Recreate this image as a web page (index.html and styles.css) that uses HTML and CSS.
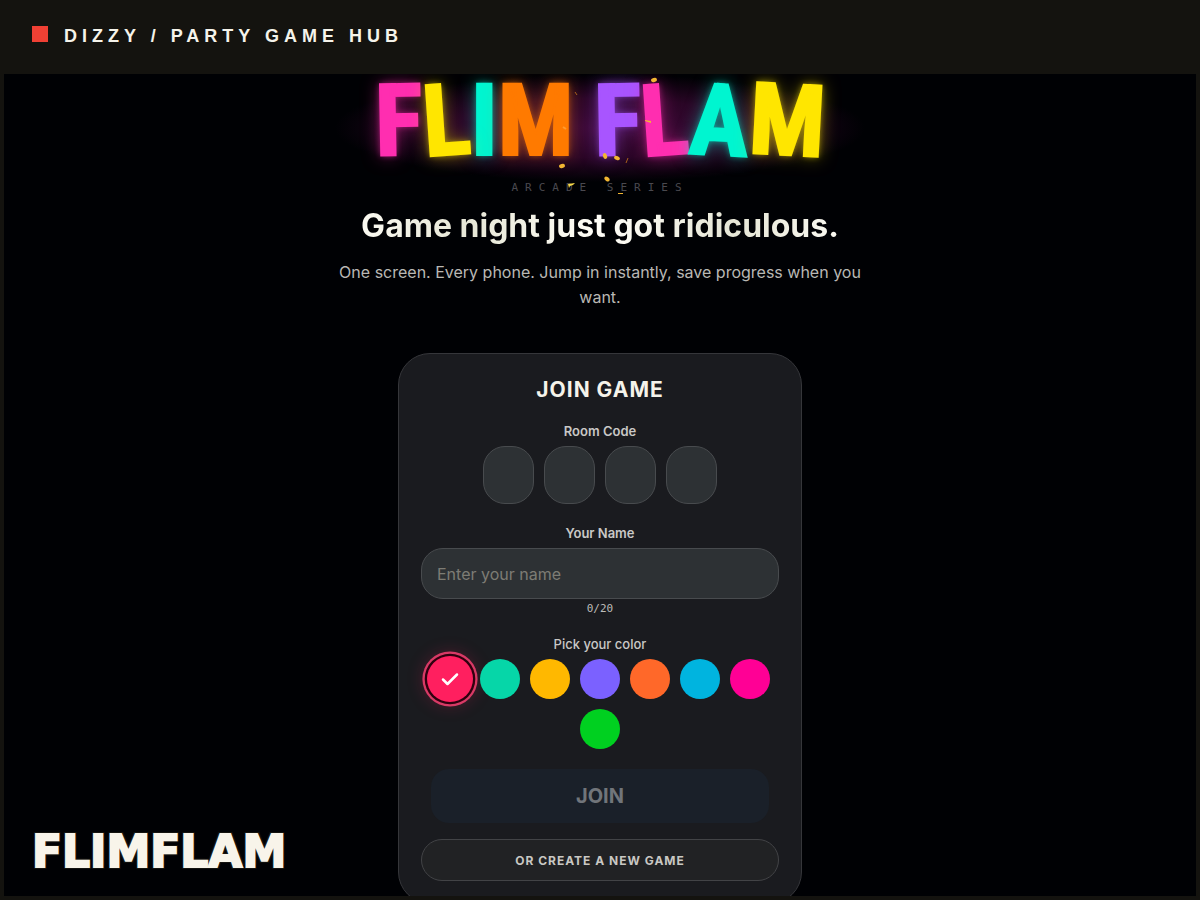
FILE: index.html
```html
<!DOCTYPE html>
<html lang="en">
<head>
<meta charset="UTF-8" />
<meta name="viewport" content="width=device-width, initial-scale=1" />
<title>FlimFlam</title>
<link rel="stylesheet" href="styles.css">
</head>
<body>

<header class="topbar">
  <span class="topbar-mark"></span>
  <span class="topbar-text">DIZZY / PARTY GAME HUB</span>
</header>

<main class="stage">
  <div class="hero">
    <div class="logo">
      <div class="logo-word">
        <span class="letter pink tilt-a">F</span><span class="letter yellow tilt-b">L</span><span class="letter teal">I</span><span class="letter orange">M</span>
      </div>
      <div class="logo-word">
        <span class="letter purple tilt-a">F</span><span class="letter pink tilt-b">L</span><span class="letter teal tilt-c">A</span><span class="letter yellow tilt-c">M</span>
      </div>
      <svg class="confetti" viewBox="0 0 440 130" aria-hidden="true">
        <g fill="#f2b632">
          <ellipse cx="274" cy="6" rx="3" ry="2" transform="rotate(-15 274 6)" />
          <ellipse cx="182" cy="92" rx="3" ry="2" transform="rotate(-15 182 92)" />
          <ellipse cx="225" cy="82" rx="2" ry="3" transform="rotate(-20 225 82)" />
          <ellipse cx="237" cy="84" rx="3" ry="2" transform="rotate(25 237 84)" />
          <ellipse cx="227" cy="105" rx="3" ry="2" transform="rotate(35 227 105)" />
          <path d="M265 46l6 1v2l-6-2z" />
          <path d="M188 110l7-1-2 2-3 1-1 2z" fill="#f5d94a" />
          <path d="M238 119h5v1h-5z" />
        </g>
        <path d="M248 84l-2 5M195 18l2 3" stroke="#a8621c" stroke-width="1" />
        <path d="M183 53l3 2" stroke="#ff9a2e" stroke-width="2" />
      </svg>
    </div>
    <p class="series">ARCADE SERIES</p>
    <h1 class="headline">Game night just got ridiculous.</h1>
    <p class="intro">One screen. Every phone. Jump in instantly, save progress when you want.</p>
  </div>

  <form class="card">
    <h2 class="card-title">JOIN GAME</h2>

    <fieldset class="group">
      <legend class="label">Room Code</legend>
      <div class="code">
        <input class="code-box" type="text" maxlength="1" autocomplete="off" aria-label="Room code, character 1" />
        <input class="code-box" type="text" maxlength="1" autocomplete="off" aria-label="Room code, character 2" />
        <input class="code-box" type="text" maxlength="1" autocomplete="off" aria-label="Room code, character 3" />
        <input class="code-box" type="text" maxlength="1" autocomplete="off" aria-label="Room code, character 4" />
      </div>
    </fieldset>

    <div class="group">
      <label class="label" for="name">Your Name</label>
      <input class="name-input" type="text" id="name" maxlength="20" placeholder="Enter your name" autocomplete="off" />
      <div class="counter">0/20</div>
    </div>

    <fieldset class="group">
      <legend class="label label-light">Pick your color</legend>
      <div class="colors">
        <label class="swatch">
          <input class="dot dot-red" type="radio" name="color" value="red" aria-label="Red" checked />
          <svg class="check" viewBox="0 0 20 20" aria-hidden="true"><path d="M3 10.5l4.5 4.5L17 5.5" /></svg>
        </label>
        <label class="swatch"><input class="dot dot-mint" type="radio" name="color" value="mint" aria-label="Mint" /></label>
        <label class="swatch"><input class="dot dot-amber" type="radio" name="color" value="amber" aria-label="Amber" /></label>
        <label class="swatch"><input class="dot dot-violet" type="radio" name="color" value="violet" aria-label="Violet" /></label>
        <label class="swatch"><input class="dot dot-orange" type="radio" name="color" value="orange" aria-label="Orange" /></label>
        <label class="swatch"><input class="dot dot-blue" type="radio" name="color" value="blue" aria-label="Blue" /></label>
        <label class="swatch"><input class="dot dot-magenta" type="radio" name="color" value="magenta" aria-label="Magenta" /></label>
        <label class="swatch"><input class="dot dot-green" type="radio" name="color" value="green" aria-label="Green" /></label>
      </div>
    </fieldset>

    <button class="join-btn" type="submit" disabled>JOIN</button>
    <button class="create-btn" type="button">OR CREATE A NEW GAME</button>
  </form>

  <div class="badge">FLIMFLAM</div>
</main>

</body>
</html>
```
FILE: styles.css
```css
* {
  box-sizing: border-box;
}
body {
  margin: 0;
  height: 100vh;
  display: flex;
  flex-direction: column;
  background: #14130f;
  color: #f5f3ea;
  font-family: "Inter", sans-serif;
}
h1, h2, p {
  margin: 0;
}

/* top bar */
.topbar {
  display: flex;
  align-items: center;
  gap: 16px;
  height: 74px;
  flex: none;
  padding: 0 32px 2px;
}
.topbar-mark {
  width: 16px;
  height: 16px;
  margin-bottom: 4px;
  background: #f04034;
}
.topbar-text {
  font-family: "Liberation Sans", sans-serif;
  font-size: 18px;
  font-weight: 700;
  letter-spacing: 5px;
}

/* stage */
.stage {
  position: relative;
  flex: 1;
  min-height: 0;
  margin: 0 4px 4px;
  overflow: hidden;
  display: flex;
  flex-direction: column;
  align-items: center;
  background: #000104;
}
.hero {
  width: 100%;
  max-width: 530px;
  flex: none;
  text-align: center;
}

/* logo */
.logo {
  position: relative;
  display: flex;
  justify-content: center;
  gap: 20px;
  height: 108px;
  font-family: "Roboto Condensed", "Open Sans Condensed", "Noto Sans Condensed", "Roboto", sans-serif;
  font-size: 100px;
  font-weight: 700;
  line-height: 94px;
  background: radial-gradient(closest-side, #3c0a38 0%, #2a0626 55%, transparent 100%);
}
.logo-word {
  display: flex;
}
.letter {
  -webkit-text-stroke: 2px currentColor;
  text-shadow: 0 0 6px color-mix(in srgb, currentColor 60%, transparent), 0 0 18px color-mix(in srgb, currentColor 50%, transparent);
}
.pink { color: #ff2eb0; }
.yellow { color: #ffe600; }
.teal { color: #00f5d0; }
.orange { color: #ff7a00; }
.purple { color: #a855ff; }
.tilt-a { transform: rotate(-1deg); }
.tilt-b { transform: rotate(-4deg); }
.tilt-c { transform: rotate(3deg); }
.confetti {
  position: absolute;
  top: 0;
  left: 50%;
  width: 440px;
  height: 130px;
  margin-left: -220px;
}
.series {
  font-family: "DejaVu Sans Mono", monospace;
  font-size: 11px;
  line-height: 12px;
  letter-spacing: 7px;
  color: #4a494f;
}
.headline {
  margin-top: 12px;
  font-size: 32px;
  font-weight: 700;
  line-height: 40px;
  white-space: nowrap;
  background: linear-gradient(90deg, #fffef8, #e6e6d6 25%, #fffef8 50%, #e6e6d6 75%, #fffef8);
  -webkit-background-clip: text;
  background-clip: text;
  color: transparent;
}
.intro {
  margin-top: 14px;
  font-size: 16px;
  line-height: 25px;
  color: #b9b8b4;
}

/* join card */
.card {
  flex: none;
  display: flex;
  flex-direction: column;
  width: 100%;
  max-width: 404px;
  margin-top: 43px;
  padding: 22px;
  border: 1px solid #35363a;
  border-radius: 32px;
  background: #1a1b1f;
  text-align: center;
}
.card-title {
  margin-bottom: 18px;
  font-size: 21px;
  font-weight: 700;
  line-height: 28px;
  letter-spacing: 1px;
}
.group {
  min-width: 0;
  margin: 0 0 20px;
  padding: 0;
  border: 0;
}
.label {
  display: block;
  width: 100%;
  padding: 0;
  margin-bottom: 6px;
  font-size: 13px;
  font-weight: 600;
  line-height: 18px;
  color: #c9c8c6;
}
.label-light {
  font-weight: 500;
}
.code {
  display: flex;
  justify-content: center;
  gap: 10px;
}
.code-box {
  width: 51px;
  height: 58px;
  padding: 0;
  border: 1px solid #484b4e;
  border-radius: 22px;
  background: #2d3134;
  color: #f5f3ea;
  font: 700 24px "Inter", sans-serif;
  text-align: center;
}
.name-input {
  display: block;
  width: 100%;
  height: 51px;
  padding: 0 15px;
  border: 1px solid #484b4e;
  border-radius: 22px;
  background: #2d3134;
  color: #f5f3ea;
  font: 16px "Inter", sans-serif;
}
.name-input::placeholder {
  color: #7d7c74;
}
.counter {
  margin-top: 4px;
  font-family: "DejaVu Sans Mono", monospace;
  font-size: 11px;
  line-height: 12px;
  color: #bdbcb9;
}

/* color picker */
.colors {
  display: flex;
  flex-wrap: wrap;
  justify-content: center;
  gap: 10px;
}
.swatch {
  position: relative;
  width: 40px;
  height: 40px;
}
.dot {
  display: block;
  appearance: none;
  width: 40px;
  height: 40px;
  margin: 0;
  border-radius: 50%;
  cursor: pointer;
}
.dot:checked {
  transform: scale(1.15);
  box-shadow: 0 0 0 2px #30000f, 0 0 0 4px #d83a66, 0 0 16px 2px #ff1f5f44;
}
.dot-red { background: #ff1f5f; }
.dot-mint { background: #06d6a8; }
.dot-amber { background: #ffb800; }
.dot-violet { background: #7b61ff; }
.dot-orange { background: #ff6829; }
.dot-blue { background: #00b4df; }
.dot-magenta { background: #ff0095; }
.dot-green { background: #00d020; }
.check {
  position: absolute;
  inset: 10px;
  width: 20px;
  height: 20px;
  fill: none;
  stroke: #ffffff;
  stroke-width: 2.5;
  stroke-linecap: round;
  stroke-linejoin: round;
  pointer-events: none;
}

/* buttons */
.join-btn {
  height: 54px;
  margin: 0 10px 16px;
  border: 0;
  border-radius: 18px;
  background: #1a2029;
  color: #71757a;
  font: 700 20px "Inter", sans-serif;
}
.create-btn {
  height: 42px;
  border: 1px solid #424346;
  border-radius: 21px;
  background: #212224;
  color: #c9c8c3;
  font: 700 12px "Inter", sans-serif;
  letter-spacing: 1px;
  cursor: pointer;
}

/* corner wordmark */
.badge {
  position: absolute;
  left: 26px;
  bottom: 22px;
  padding: 0 2px;
  font-family: "DejaVu Sans", sans-serif;
  font-size: 44px;
  font-weight: 700;
  line-height: 44px;
  color: #f8f4ea;
  -webkit-text-stroke: 2px #f8f4ea;
  text-shadow: 2px 2px 0 #14130f, -2px -2px 0 #14130f, 2px -2px 0 #14130f, -2px 2px 0 #14130f;
}
```
